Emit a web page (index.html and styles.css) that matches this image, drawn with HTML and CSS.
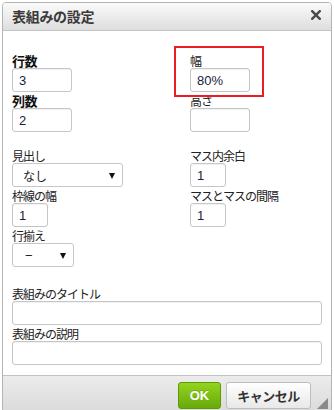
FILE: index.html
```
<!DOCTYPE html>
<html lang="ja">
<head>
<meta charset="utf-8">
<title>表組みの設定</title>
<link rel="stylesheet" href="styles.css">
</head>
<body>
<div class="dialog">
  <div class="titlebar">
    <span class="title">表組みの設定</span>
    <span class="close"><svg width="10" height="10" viewBox="0 0 10 10"><path d="M1.2 1.2 L8.8 8.8 M8.8 1.2 L1.2 8.8" stroke="#4a4a4a" stroke-width="2.4" stroke-linecap="square"/></svg></span>
  </div>
  <div class="body">
    <div class="grid">
      <div class="col">
        <div class="lbl bold">行数</div>
        <input class="field w60" type="text" value="3">
        <div class="lbl bold">列数</div>
        <input class="field w60" type="text" value="2">
      </div>
      <div class="col">
        <div class="hl">
          <div class="lbl">幅</div>
          <input class="field w60" type="text" value="80%">
        </div>
        <div class="lbl">高さ</div>
        <input class="field w60" type="text" value="">
      </div>
    </div>
    <div class="grid sec2">
      <div class="col">
        <div class="lbl">見出し</div>
        <div class="select w111"><span>なし</span><span class="arrow"></span></div>
        <div class="lbl">枠線の幅</div>
        <input class="field w36" type="text" value="1">
        <div class="lbl">行揃え</div>
        <div class="select w62"><span class="dash">−</span><span class="arrow"></span></div>
      </div>
      <div class="col">
        <div class="lbl">マス内余白</div>
        <input class="field w36" type="text" value="1">
        <div class="lbl">マスとマスの間隔</div>
        <input class="field w36" type="text" value="1">
      </div>
    </div>
    <div class="sec3">
      <div class="lbl">表組みのタイトル</div>
      <input class="field wide" type="text" value="">
      <div class="lbl">表組みの説明</div>
      <input class="field wide" type="text" value="">
    </div>
  </div>
  <div class="footer">
    <button class="btn ok">OK</button>
    <button class="btn cancel">キャンセル</button>
    <span class="grip"></span>
  </div>
</div>
</body>
</html>
```
FILE: styles.css
```
html, body {
  margin: 0;
  padding: 0;
  background: #fff;
  overflow: hidden;
}
body {
  font-family: "Liberation Sans", "Noto Sans CJK JP", sans-serif;
  color: #222;
}
.dialog {
  position: relative;
  margin: 2px 0 0 2px;
  width: 328px;
  border: 1px solid #b4b4b4;
  border-radius: 4px 4px 0 0;
  background: #fff;
}
.titlebar {
  height: 27px;
  border-bottom: 1px solid #c4c4c4;
  border-radius: 3px 3px 0 0;
  background: linear-gradient(#fafafa, #dedede);
  display: flex;
  align-items: center;
  justify-content: space-between;
  padding: 0 10px 0 9px;
}
.title {
  font-family: "Noto Sans CJK JP", sans-serif;
  font-weight: bold;
  font-size: 14px;
  letter-spacing: -0.3px;
  color: #3a3a3a;
  line-height: 27px;
}
.close {
  display: flex;
  width: 10px;
  height: 10px;
  margin-top: -3px;
}
.body {
  padding: 21px 9px 10px 9px;
}
.grid {
  display: grid;
  grid-template-columns: 178px 1fr;
}
.sec2 {
  margin-top: 15px;
}
.sec3 {
  margin-top: 18px;
}
.col {
  display: flex;
  flex-direction: column;
  align-items: flex-start;
}
.lbl {
  height: 16px;
  line-height: 18px;
  font-family: "Noto Sans CJK JP", sans-serif;
  font-size: 12px;
  letter-spacing: -1px;
  color: #222;
  white-space: nowrap;
}
.lbl.bold {
  font-weight: bold;
  font-size: 13px;
  letter-spacing: -0.5px;
  color: #111;
}
.hl {
  position: relative;
  display: flex;
  flex-direction: column;
  align-items: flex-start;
}
.hl::after {
  content: "";
  position: absolute;
  left: -16px;
  top: -6px;
  width: 86px;
  height: 47px;
  border: 2px solid #ea1c24;
  pointer-events: none;
}
.field {
  box-sizing: border-box;
  height: 24px;
  margin: 0;
  padding: 0 6px;
  border: 1px solid #c6c6c6;
  border-radius: 3px;
  box-shadow: inset 0 1px 1px rgba(0,0,0,0.06);
  background: #fff;
  font-family: "Liberation Sans", sans-serif;
  font-size: 13px;
  color: #1c1c3c;
  outline: none;
}
.w60 { width: 60px; }
.w36 { width: 36px; }
.wide { width: 310px; display: block; }
.select {
  box-sizing: border-box;
  height: 24px;
  border: 1px solid #c6c6c6;
  border-radius: 3px;
  background: #fff;
  display: flex;
  align-items: center;
  justify-content: space-between;
  padding: 0 7px 0 10px;
  font-family: "Noto Sans CJK JP", sans-serif;
  font-size: 12px;
  color: #222;
}
.w111 { width: 111px; }
.w62 { width: 62px; padding-left: 12px; }
.dash {
  font-family: "Liberation Sans", sans-serif;
  font-size: 13px;
}
.arrow {
  width: 0;
  height: 0;
  border-left: 3px solid transparent;
  border-right: 3px solid transparent;
  border-top: 6px solid #111;
  margin-top: 1px;
}
.footer {
  position: relative;
  height: 40px;
  border-top: 1px solid #c2c2c2;
  background: linear-gradient(#ececec, #d9d9d9);
  display: flex;
  justify-content: flex-end;
  align-items: flex-start;
  gap: 5px;
  padding: 6px 20px 0 0;
  box-sizing: border-box;
}
.btn {
  box-sizing: border-box;
  height: 27px;
  margin: 0;
  border-radius: 3px;
  font-weight: bold;
  font-size: 13px;
  cursor: pointer;
}
.ok {
  width: 43px;
  border: 1px solid #5e9a08;
  background: linear-gradient(#92d41f, #69a90b);
  color: #fff;
  font-family: "Liberation Sans", sans-serif;
  text-shadow: 0 -1px 0 rgba(0,0,0,0.15);
}
.cancel {
  width: 85px;
  border: 1px solid #bdbdbd;
  background: linear-gradient(#ffffff, #e8e8e8);
  color: #333;
  font-family: "Noto Sans CJK JP", sans-serif;
  letter-spacing: -0.5px;
}
.grip {
  position: absolute;
  right: 3px;
  top: 22px;
  width: 0;
  height: 0;
  border-left: 11px solid transparent;
  border-bottom: 11px solid #8a8a8a;
}
```
